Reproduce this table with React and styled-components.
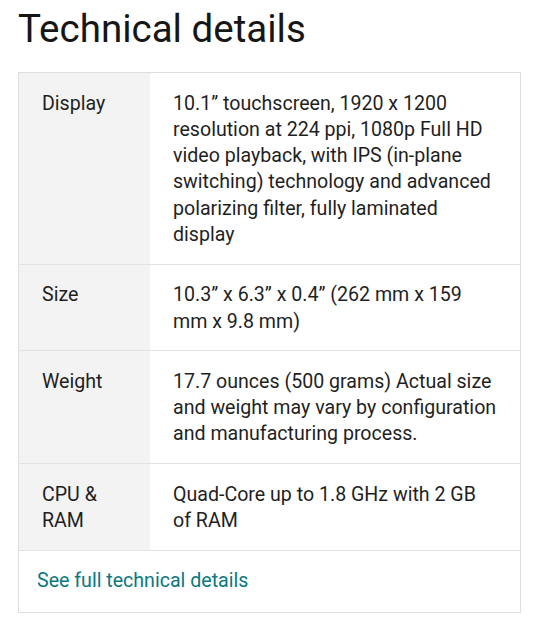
import React from "react";
import styled, { createGlobalStyle } from "styled-components";

const GlobalStyle = createGlobalStyle`
  body {
    margin: 0;
    background: #ffffff;
    font-family: Roboto, "Noto Sans", Arial, sans-serif;
    color: #1f1f1f;
  }
`;

const Page = styled.div`
  padding: 0 19px 0 18px;
`;

const Title = styled.h1`
  font-size: 38.5px;
  font-weight: 400;
  margin: 5px 0 19px;
  line-height: 48px;
  color: #161616;
`;

const Table = styled.div`
  border: 1px solid #dedede;
`;

const Row = styled.div`
  display: grid;
  grid-template-columns: 131px 1fr;
  border-bottom: 1px solid #e3e3e3;
`;

const Cell = styled.div`
  padding: 17.5px 23px 15.5px 23px;
  font-size: 19.6px;
  line-height: 26.3px;
  background: ${(p) => (p.$head ? "#f3f3f3" : "transparent")};
`;

const Footer = styled.div`
  padding: 17.5px 18px 17.5px;
`;

const Link = styled.a`
  font-size: 19.6px;
  line-height: 26.3px;
  color: #0a7880;
  text-decoration: none;
`;

const specs = [
  {
    label: "Display",
    value:
      "10.1\u201D touchscreen, 1920 x 1200 resolution at 224 ppi, 1080p Full HD video playback, with IPS (in-plane switching) technology and advanced polarizing filter, fully laminated display",
  },
  {
    label: "Size",
    value: "10.3\u201D x 6.3\u201D x 0.4\u201D (262 mm x 159 mm x 9.8 mm)",
  },
  {
    label: "Weight",
    value:
      "17.7 ounces (500 grams) Actual size and weight may vary by configuration and manufacturing process.",
  },
  {
    label: "CPU & RAM",
    value: "Quad-Core up to 1.8 GHz with 2 GB of RAM",
  },
];

export default function App() {
  return (
    <Page>
      <GlobalStyle />
      <Title>Technical details</Title>
      <Table>
        {specs.map((s) => (
          <Row key={s.label}>
            <Cell $head>{s.label}</Cell>
            <Cell>{s.value}</Cell>
          </Row>
        ))}
        <Footer>
          <Link href="#">See full technical details</Link>
        </Footer>
      </Table>
    </Page>
  );
}
